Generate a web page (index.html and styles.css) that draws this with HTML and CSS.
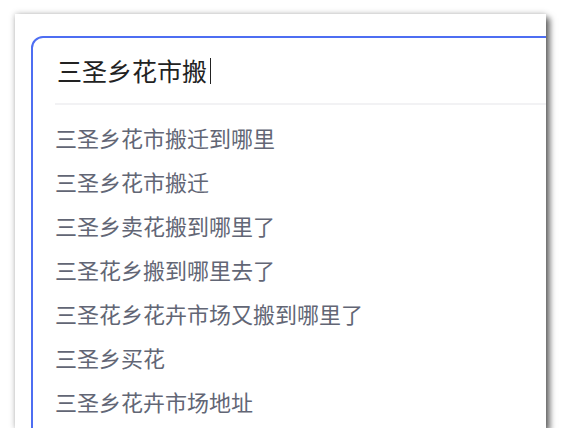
FILE: index.html
```html
<!DOCTYPE html>
<html lang="zh-CN">
<head>
  <meta charset="UTF-8" />
  <title>搜索建议</title>
  <link rel="stylesheet" href="styles.css">
</head>
<body>
  <div class="shot">
    <div class="search-box">
      <div class="query">三圣乡花市搬<span class="caret"></span></div>
      <ul class="suggest">
        <li>三圣乡花市搬迁到哪里</li>
        <li>三圣乡花市搬迁</li>
        <li>三圣乡卖花搬到哪里了</li>
        <li>三圣花乡搬到哪里去了</li>
        <li>三圣花乡花卉市场又搬到哪里了</li>
        <li>三圣乡买花</li>
        <li>三圣乡花卉市场地址</li>
      </ul>
    </div>
  </div>
</body>
</html>
```

FILE: styles.css
```css
*, *::before, *::after {
  box-sizing: border-box;
}
body {
  margin: 0;
  background: #fff;
  font-family: "Noto Sans CJK SC", "Noto Sans", sans-serif;
}

/* screenshot frame */
.shot {
  margin: 14px 0 0 15px;
  width: 531px;
  height: 414px;
  background: #fff;
  overflow: hidden;
  box-shadow: 4px 4px 6px rgba(0, 0, 0, 0.55), 0 0 6px rgba(0, 0, 0, 0.25);
}

.search-box {
  margin: 22px 0 0 16px;
  width: 600px;
  height: 500px;
  border: 2px solid #4e6ef2;
  border-radius: 12px 0 0 0;
  padding-left: 22px;
}

.query {
  display: flex;
  align-items: center;
  padding: 19px 0 19px 2px;
  line-height: 27px;
  font-size: 25px;
  color: #222;
  border-bottom: 2px solid #f2f2f4;
}
.caret {
  display: inline-block;
  width: 1px;
  height: 26px;
  margin-left: 3px;
  background: #222;
}

.suggest {
  list-style: none;
  margin: 0;
  padding: 10px 0 0;
}
.suggest li {
  line-height: 44px;
  font-size: 22px;
  color: #626675;
}
```
